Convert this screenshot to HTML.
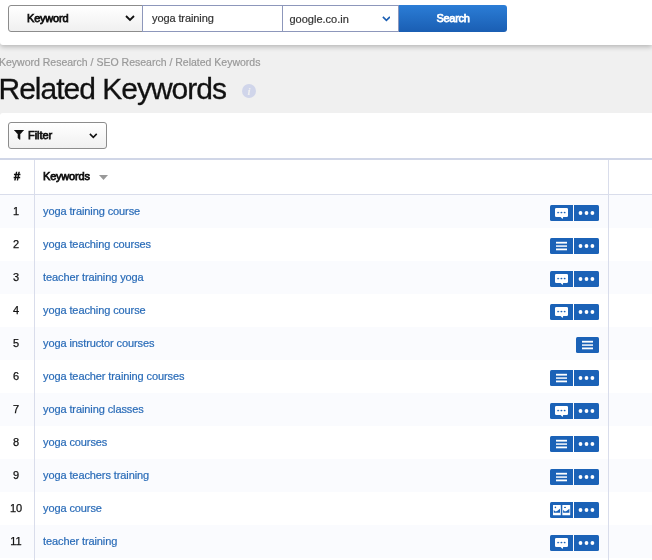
<!DOCTYPE html>
<html><head><meta charset="utf-8"><title>Related Keywords</title>
<style>
*{box-sizing:border-box;margin:0;padding:0}
html,body{width:652px;height:560px;overflow:hidden}
body{background:#f0f0f0;font-family:"Liberation Sans",sans-serif;font-size:11px;color:#111;position:relative}
.abs{position:absolute}
#wrap{position:absolute;left:0;top:0;width:652px;height:560px;will-change:transform}
#topbar{left:0;top:0;width:652px;height:45px;background:#fff;box-shadow:0 2px 5px rgba(0,0,0,.24);border-radius:0 0 0 3px}
.btn{border:1px solid #8c8c8c;border-radius:3px;background:linear-gradient(#fff,#f0f0f0);-webkit-text-stroke:.75px #111;color:#111}
#kw{left:8px;top:5px;width:135px;height:27px;border-radius:3px 0 0 3px}
#kw span{position:absolute;left:18px;top:6px;letter-spacing:-.2px}
#inp{left:142px;top:5px;width:141px;height:27px;border:1px solid #8d97bb;background:#fff}
#inp span{-webkit-text-stroke:.2px #333;position:absolute;left:9px;top:6px;letter-spacing:-.1px;color:#333}
#dom{left:282px;top:5px;width:117px;height:27px;border:1px solid #8d97bb;background:#fff}
#dom span{-webkit-text-stroke:.2px #333;position:absolute;left:6.500px;top:7px;color:#333}
#search{left:399px;top:5px;width:108px;height:27px;background:linear-gradient(#2b7dd6,#1a5eb3);border-radius:0 3px 3px 0;color:#fff;-webkit-text-stroke:.75px #fff}
#search span{position:absolute;left:37.500px;top:7px;letter-spacing:-.3px}
#crumb{-webkit-text-stroke:.2px #999;left:-1px;top:56px;font-size:10.5px;color:#999;white-space:nowrap}
#title{-webkit-text-stroke:.3px #111;left:-1.500px;top:72px;font-size:30px;letter-spacing:-1px;color:#111;white-space:nowrap}
#info{left:242px;top:84px;width:14px;height:14px;border-radius:50%;background:#d0d5ea;color:#f0f0f0;font:italic bold 11px "Liberation Serif",serif;text-align:center;line-height:14px}
#panel{left:0;top:113px;width:652px;height:447px;background:#fff;border-radius:3px 0 0 0}
#filter{left:8px;top:122px;width:99px;height:27px}
#filter span{position:absolute;left:19px;top:6px;letter-spacing:-.05px}
#tbl{left:0;top:158px;width:652px}
.row{position:absolute;left:0;width:652px;height:33px}
.row.odd{background:#fafbfe}
.row .n{-webkit-text-stroke:.25px #111;position:absolute;left:0;width:32px;text-align:center;top:10px;color:#111}
.row a{-webkit-text-stroke:.2px #2a6cb8;position:absolute;left:43px;top:10px;color:#2a6cb8;text-decoration:none;white-space:nowrap;letter-spacing:-.1px}
.hn{left:14px;top:10px;-webkit-text-stroke:.75px #111}
.hk{left:43px;top:10px;-webkit-text-stroke:.75px #111;letter-spacing:-.2px}
.vl{position:absolute;width:1px;background:#d9ddeb;top:160px;height:400px}
.ib{position:absolute;height:16px;background:#1b62b7;top:10px}
.ib.l{left:550px;width:23px;border-radius:1.500px 0 0 1.500px}
.ib.r{left:574px;width:25px;border-radius:0 1.500px 1.500px 0}
.ib.s{left:576px;width:23px;border-radius:1.500px}
</style></head><body>
<div id="wrap">
<div id="topbar" class="abs"></div>
<div id="kw" class="abs btn"><span>Keyword</span>
<svg class="abs" style="left:115.800px;top:9.200px" width="10" height="7" viewBox="0 0 10 7"><path d="M1 1l4 4 4-4" fill="none" stroke="#111" stroke-width="1.8"/></svg></div>
<div id="inp" class="abs"><span>yoga training</span></div>
<div id="dom" class="abs"><span>google.co.in</span>
<svg class="abs" style="left:98.500px;top:9.900px" width="8.800" height="6.200" viewBox="0 0 10 7"><path d="M1 1l4 4 4-4" fill="none" stroke="#1a5eb3" stroke-width="1.8"/></svg></div>
<div id="search" class="abs"><span>Search</span></div>
<div id="crumb" class="abs">Keyword Research / SEO Research / Related Keywords</div>
<div id="title" class="abs">Related Keywords</div>
<div id="info" class="abs">i</div>
<div id="panel" class="abs"></div>
<div id="filter" class="abs btn"><svg class="abs" style="left:4.500px;top:7.400px" width="10" height="10" viewBox="0 0 10 10"><path d="M.3 0h9.400l-3.700 4.300v5.200l-2-1.500v-3.700z" fill="#111" stroke="#111" stroke-width=".6" stroke-linejoin="round"/></svg><span>Filter</span>
<svg class="abs" style="left:80.300px;top:10.300px" width="8.600" height="6" viewBox="0 0 10 7"><path d="M1 1l4 4 4-4" fill="none" stroke="#111" stroke-width="1.8"/></svg></div>
<div class="abs" style="left:0;top:158px;width:652px;height:2px;background:#d0d6e7"></div>
<div class="abs" style="left:0;top:194px;width:652px;height:1px;background:#d9ddeb"></div>
<div id="rows">
<div class="abs hdr" style="left:0;top:160px;width:652px;height:34px"><span class="abs hn">#</span><span class="abs hk">Keywords</span><svg class="abs" style="left:99px;top:15px" width="9" height="5" viewBox="0 0 9 5"><path d="M0 0h9l-4.5 5z" fill="#999"/></svg></div>
<div class="row odd" style="top:195px"><span class="n">1</span><a>yoga training course</a><span class="ib l"><svg class="abs" style="left:5px;top:3px" width="13" height="11" viewBox="0 0 13 11"><path d="M1.300 0h10.400a1.300 1.300 0 0 1 1.300 1.300v6.400a1.300 1.300 0 0 1-1.300 1.300h-3.500l-.6 2-2-2h-4.300a1.300 1.300 0 0 1-1.300-1.300v-6.400a1.300 1.300 0 0 1 1.300-1.300z" fill="#fff"/><g fill="#1b62b7"><rect x="2.500" y="4.250" width="7.800" height=".5" opacity=".3"/><circle cx="3.100" cy="4.500" r=".85"/><circle cx="6.400" cy="4.500" r=".85"/><circle cx="9.700" cy="4.500" r=".85"/></g></svg></span><span class="ib r"><svg class="abs" style="left:4px;top:5px" width="17" height="6" viewBox="0 0 17 6"><g fill="#fff"><circle cx="2.500" cy="3" r="1.900"/><circle cx="8.500" cy="3" r="1.900"/><circle cx="14.400" cy="3" r="1.900"/></g></svg></span></div>
<div class="row" style="top:228px"><span class="n">2</span><a>yoga teaching courses</a><span class="ib l"><svg class="abs" style="left:6px;top:3px" width="11" height="10" viewBox="0 0 11 10"><g fill="#fff"><rect y=".8" width="11" height="1.800"/><rect y="4.200" width="11" height="1.800" opacity=".82"/><rect y="7.500" width="11" height="1.800"/></g></svg></span><span class="ib r"><svg class="abs" style="left:4px;top:5px" width="17" height="6" viewBox="0 0 17 6"><g fill="#fff"><circle cx="2.500" cy="3" r="1.900"/><circle cx="8.500" cy="3" r="1.900"/><circle cx="14.400" cy="3" r="1.900"/></g></svg></span></div>
<div class="row odd" style="top:261px"><span class="n">3</span><a>teacher training yoga</a><span class="ib l"><svg class="abs" style="left:5px;top:3px" width="13" height="11" viewBox="0 0 13 11"><path d="M1.300 0h10.400a1.300 1.300 0 0 1 1.300 1.300v6.400a1.300 1.300 0 0 1-1.300 1.300h-3.500l-.6 2-2-2h-4.300a1.300 1.300 0 0 1-1.300-1.300v-6.400a1.300 1.300 0 0 1 1.300-1.300z" fill="#fff"/><g fill="#1b62b7"><rect x="2.500" y="4.250" width="7.800" height=".5" opacity=".3"/><circle cx="3.100" cy="4.500" r=".85"/><circle cx="6.400" cy="4.500" r=".85"/><circle cx="9.700" cy="4.500" r=".85"/></g></svg></span><span class="ib r"><svg class="abs" style="left:4px;top:5px" width="17" height="6" viewBox="0 0 17 6"><g fill="#fff"><circle cx="2.500" cy="3" r="1.900"/><circle cx="8.500" cy="3" r="1.900"/><circle cx="14.400" cy="3" r="1.900"/></g></svg></span></div>
<div class="row" style="top:294px"><span class="n">4</span><a>yoga teaching course</a><span class="ib l"><svg class="abs" style="left:5px;top:3px" width="13" height="11" viewBox="0 0 13 11"><path d="M1.300 0h10.400a1.300 1.300 0 0 1 1.300 1.300v6.400a1.300 1.300 0 0 1-1.300 1.300h-3.500l-.6 2-2-2h-4.300a1.300 1.300 0 0 1-1.300-1.300v-6.400a1.300 1.300 0 0 1 1.300-1.300z" fill="#fff"/><g fill="#1b62b7"><rect x="2.500" y="4.250" width="7.800" height=".5" opacity=".3"/><circle cx="3.100" cy="4.500" r=".85"/><circle cx="6.400" cy="4.500" r=".85"/><circle cx="9.700" cy="4.500" r=".85"/></g></svg></span><span class="ib r"><svg class="abs" style="left:4px;top:5px" width="17" height="6" viewBox="0 0 17 6"><g fill="#fff"><circle cx="2.500" cy="3" r="1.900"/><circle cx="8.500" cy="3" r="1.900"/><circle cx="14.400" cy="3" r="1.900"/></g></svg></span></div>
<div class="row odd" style="top:327px"><span class="n">5</span><a>yoga instructor courses</a><span class="ib s"><svg class="abs" style="left:6px;top:3px" width="11" height="10" viewBox="0 0 11 10"><g fill="#fff"><rect y=".8" width="11" height="1.800"/><rect y="4.200" width="11" height="1.800" opacity=".82"/><rect y="7.500" width="11" height="1.800"/></g></svg></span></div>
<div class="row" style="top:360px"><span class="n">6</span><a>yoga teacher training courses</a><span class="ib l"><svg class="abs" style="left:6px;top:3px" width="11" height="10" viewBox="0 0 11 10"><g fill="#fff"><rect y=".8" width="11" height="1.800"/><rect y="4.200" width="11" height="1.800" opacity=".82"/><rect y="7.500" width="11" height="1.800"/></g></svg></span><span class="ib r"><svg class="abs" style="left:4px;top:5px" width="17" height="6" viewBox="0 0 17 6"><g fill="#fff"><circle cx="2.500" cy="3" r="1.900"/><circle cx="8.500" cy="3" r="1.900"/><circle cx="14.400" cy="3" r="1.900"/></g></svg></span></div>
<div class="row odd" style="top:393px"><span class="n">7</span><a>yoga training classes</a><span class="ib l"><svg class="abs" style="left:5px;top:3px" width="13" height="11" viewBox="0 0 13 11"><path d="M1.300 0h10.400a1.300 1.300 0 0 1 1.300 1.300v6.400a1.300 1.300 0 0 1-1.300 1.300h-3.500l-.6 2-2-2h-4.300a1.300 1.300 0 0 1-1.300-1.300v-6.400a1.300 1.300 0 0 1 1.300-1.300z" fill="#fff"/><g fill="#1b62b7"><rect x="2.500" y="4.250" width="7.800" height=".5" opacity=".3"/><circle cx="3.100" cy="4.500" r=".85"/><circle cx="6.400" cy="4.500" r=".85"/><circle cx="9.700" cy="4.500" r=".85"/></g></svg></span><span class="ib r"><svg class="abs" style="left:4px;top:5px" width="17" height="6" viewBox="0 0 17 6"><g fill="#fff"><circle cx="2.500" cy="3" r="1.900"/><circle cx="8.500" cy="3" r="1.900"/><circle cx="14.400" cy="3" r="1.900"/></g></svg></span></div>
<div class="row" style="top:426px"><span class="n">8</span><a>yoga courses</a><span class="ib l"><svg class="abs" style="left:6px;top:3px" width="11" height="10" viewBox="0 0 11 10"><g fill="#fff"><rect y=".8" width="11" height="1.800"/><rect y="4.200" width="11" height="1.800" opacity=".82"/><rect y="7.500" width="11" height="1.800"/></g></svg></span><span class="ib r"><svg class="abs" style="left:4px;top:5px" width="17" height="6" viewBox="0 0 17 6"><g fill="#fff"><circle cx="2.500" cy="3" r="1.900"/><circle cx="8.500" cy="3" r="1.900"/><circle cx="14.400" cy="3" r="1.900"/></g></svg></span></div>
<div class="row odd" style="top:459px"><span class="n">9</span><a>yoga teachers training</a><span class="ib l"><svg class="abs" style="left:6px;top:3px" width="11" height="10" viewBox="0 0 11 10"><g fill="#fff"><rect y=".8" width="11" height="1.800"/><rect y="4.200" width="11" height="1.800" opacity=".82"/><rect y="7.500" width="11" height="1.800"/></g></svg></span><span class="ib r"><svg class="abs" style="left:4px;top:5px" width="17" height="6" viewBox="0 0 17 6"><g fill="#fff"><circle cx="2.500" cy="3" r="1.900"/><circle cx="8.500" cy="3" r="1.900"/><circle cx="14.400" cy="3" r="1.900"/></g></svg></span></div>
<div class="row" style="top:492px"><span class="n">10</span><a>yoga course</a><span class="ib l"><svg class="abs" style="left:3px;top:3px" width="18" height="11" viewBox="0 0 18 11"><g fill="#fff"><rect x="-.1" y="0" width="7.900" height="10.200" rx=".5"/><rect x="9.300" y="0" width="7.900" height="10.200" rx=".5"/></g><g fill="#1b62b7"><path d="M.7 4.900l1.800 1.600 1.600-.4 2.900-2.300v3.900h-6.300z"/><path d="M10.100 4.900l1.800 1.600 1.600-.4 2.900-2.300v3.900h-6.300z"/><circle cx="2.400" cy="2.400" r=".8"/><ellipse cx="12" cy="2.400" rx="1" ry=".7"/></g></svg></span><span class="ib r"><svg class="abs" style="left:4px;top:5px" width="17" height="6" viewBox="0 0 17 6"><g fill="#fff"><circle cx="2.500" cy="3" r="1.900"/><circle cx="8.500" cy="3" r="1.900"/><circle cx="14.400" cy="3" r="1.900"/></g></svg></span></div>
<div class="row odd" style="top:525px"><span class="n">11</span><a>teacher training</a><span class="ib l"><svg class="abs" style="left:5px;top:3px" width="13" height="11" viewBox="0 0 13 11"><path d="M1.300 0h10.400a1.300 1.300 0 0 1 1.300 1.300v6.400a1.300 1.300 0 0 1-1.300 1.300h-3.500l-.6 2-2-2h-4.300a1.300 1.300 0 0 1-1.300-1.300v-6.400a1.300 1.300 0 0 1 1.300-1.300z" fill="#fff"/><g fill="#1b62b7"><rect x="2.500" y="4.250" width="7.800" height=".5" opacity=".3"/><circle cx="3.100" cy="4.500" r=".85"/><circle cx="6.400" cy="4.500" r=".85"/><circle cx="9.700" cy="4.500" r=".85"/></g></svg></span><span class="ib r"><svg class="abs" style="left:4px;top:5px" width="17" height="6" viewBox="0 0 17 6"><g fill="#fff"><circle cx="2.500" cy="3" r="1.900"/><circle cx="8.500" cy="3" r="1.900"/><circle cx="14.400" cy="3" r="1.900"/></g></svg></span></div>
</div><!--endrows-->
<div class="vl" style="left:34px"></div>
<div class="vl" style="left:608px"></div>
</div>
</body></html>
